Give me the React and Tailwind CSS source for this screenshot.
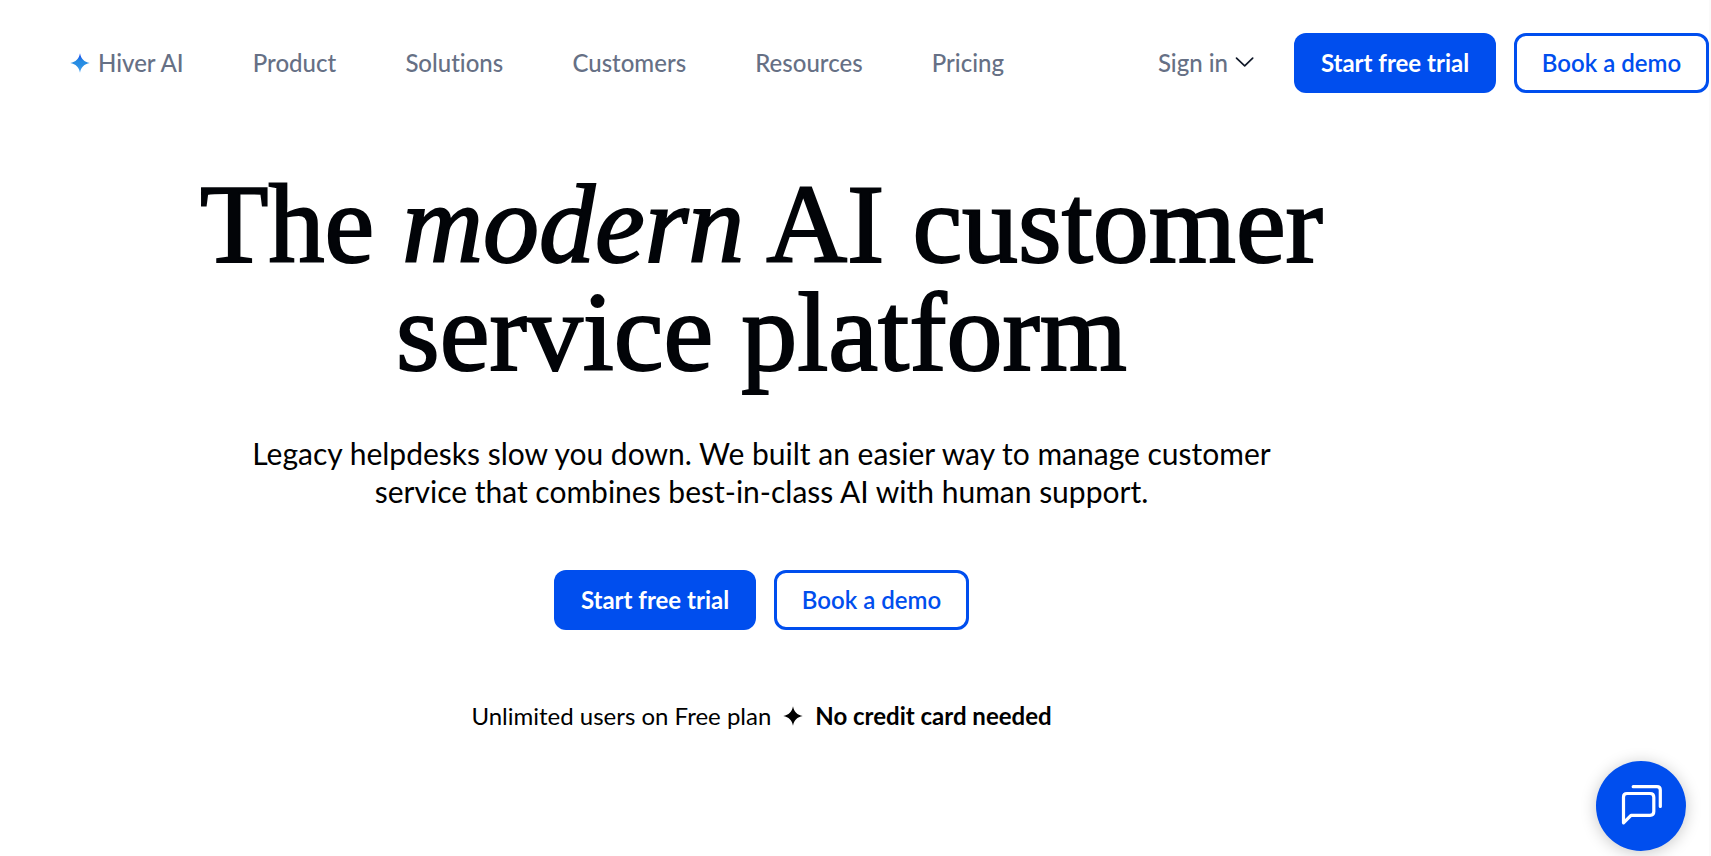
import React from 'react';

const navLinks = ['Product', 'Solutions', 'Customers', 'Resources', 'Pricing'];

const Sparkle = ({ className, children, fill = 'currentColor' }) => (
    <svg viewBox="0 0 20 20" className={className} aria-hidden="true">
        {children}
        <path fill={fill} d="M10 0.3C11 5.8 14.2 9 19.7 10C14.2 11 11 14.2 10 19.7C9 14.2 5.8 11 0.3 10C5.8 9 9 5.8 10 0.3Z" />
    </svg>
);

const CtaButtons = () => (
    <div className="flex shrink-0 gap-[18px] text-2xl whitespace-nowrap">
        <button type="button" className="h-[60px] w-[202px] rounded-xl bg-[#004eee] font-bold text-white">
            Start free trial
        </button>
        <button type="button" className="h-[60px] w-[195px] rounded-xl border-3 border-[#004eee] bg-white font-semibold text-[#004eee]">
            Book a demo
        </button>
    </div>
);

const Header = () => (
    <header className="flex items-center justify-between pt-[33px] pl-[70px]">
        <nav className="flex w-[934px] items-center justify-between text-2xl font-medium whitespace-nowrap text-[#667085]">
            <a href="#hiver-ai" className="flex items-center gap-2">
                <Sparkle className="size-5" fill="url(#sparkle)">
                    <defs>
                        <linearGradient id="sparkle" x1="0" y1="0" x2="0" y2="1">
                            <stop offset="0.1" stopColor="#1450ee" />
                            <stop offset="0.4" stopColor="#258be2" />
                            <stop offset="0.65" stopColor="#2b8fe4" />
                            <stop offset="1" stopColor="#4fa8f5" />
                        </linearGradient>
                    </defs>
                </Sparkle>
                Hiver AI
            </a>
            {navLinks.map((label) => (
                <a key={label} href={`#${label.toLowerCase()}`}>
                    {label}
                </a>
            ))}
        </nav>

        <div className="flex items-center gap-10">
            <button type="button" className="flex items-center gap-1.5 text-2xl font-medium whitespace-nowrap text-[#667085]">
                Sign in
                <svg viewBox="0 0 20 20" className="size-5 text-[#101828]" fill="none" stroke="currentColor" strokeWidth="1.7" strokeLinecap="round" strokeLinejoin="round" aria-hidden="true">
                    <path d="M2.5 5.2L10.7 12.9L18.7 5.2" />
                </svg>
            </button>
            <CtaButtons />
        </div>
    </header>
);

const Hero = () => (
    <main className="flex flex-col items-center pr-[186px] text-center text-black">
        <h1 className="mt-[77px] font-['Liberation_Serif',serif] text-[112px] leading-[108px] whitespace-nowrap text-[#020408] [-webkit-text-stroke:2px_#020408]">
            The <em>modern</em> AI customer
            <br />
            service platform
        </h1>
        <p className="mt-12 text-[30px] leading-[38px] whitespace-nowrap">
            Legacy helpdesks slow you down. We built an easier way to manage customer
            <br />
            service that combines best-in-class AI with human support.
        </p>
        <div className="mt-[60px]">
            <CtaButtons />
        </div>
        <p className="mt-[70px] flex items-center gap-3 text-2xl whitespace-nowrap">
            Unlimited users on Free plan
            <Sparkle className="size-5" />
            <strong>No credit card needed</strong>
        </p>
    </main>
);

const ChatButton = () => (
    <button
        type="button"
        aria-label="Open chat"
        className="fixed right-[25px] bottom-[5px] flex size-[90px] items-center justify-center rounded-full bg-[#004eee] text-white shadow-[0_2px_16px_rgba(0,0,0,0.22)]"
    >
        <svg viewBox="0 0 44 44" className="size-11" fill="none" stroke="currentColor" strokeWidth="3.2" strokeLinecap="round" strokeLinejoin="round" aria-hidden="true">
            <path d="M8 9.5H31Q34.8 9.5 34.8 13.3V27.5Q34.8 31.3 31 31.3H12L4.5 38.8V13Q4.5 9.5 8 9.5Z" />
            <path d="M14.2 2.7H38Q41.3 2.7 41.3 6V22.5" />
        </svg>
    </button>
);

const App = () => (
    <div className="min-h-screen overflow-x-hidden border-r-2 border-[#fafafa] bg-white font-['Lato',sans-serif] [font-variant-ligatures:none]">
        <Header />
        <Hero />
        <ChatButton />
    </div>
);

export default App;
